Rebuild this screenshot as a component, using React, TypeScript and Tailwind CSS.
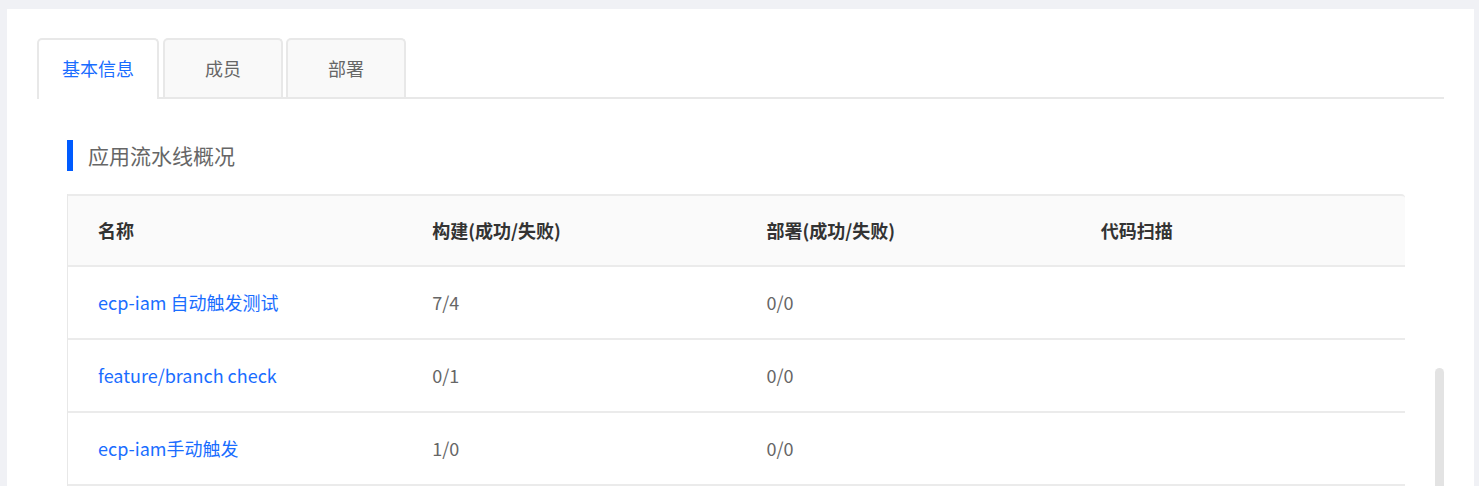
const rows = [
  { name: "ecp-iam 自动触发测试", build: "7/4", deploy: "0/0", scan: "" },
  { name: "feature/branch check", build: "0/1", deploy: "0/0", scan: "" },
  { name: "ecp-iam手动触发", build: "1/0", deploy: "0/0", scan: "" },
];

const tabs = ["基本信息", "成员", "部署"];

export default function App() {
  return (
    <div
      className="h-[486px] overflow-hidden bg-[#f0f1f5] pt-[9px] pl-[7px] pr-[5px]"
      style={{ fontFamily: '"Noto Sans CJK SC", "Noto Sans", sans-serif' }}
    >
      <div className="relative h-full bg-white px-[30px] pt-[30px]">
        {/* TABS */}
        <div className="flex h-[60px] items-end border-b-2 border-[#e8e8e8]">
          {tabs.map((t, i) => (
            <div
              key={t}
              className={
                i === 0
                  ? "-mb-[2px] mr-[4px] flex h-[61px] w-[122px] items-center justify-center rounded-t-[5px] border-2 border-b-0 border-[#e8e8e8] bg-white pb-[2px] text-[18px] text-[#1a6dff]"
                  : "mr-[3px] flex h-[59px] w-[120px] items-center justify-center rounded-t-[5px] border-2 border-b-0 border-[#e8e8e8] bg-[#f9f9f9] text-[18px] text-[#666]"
              }
            >
              {t}
            </div>
          ))}
        </div>

        <div className="pl-[30px] pr-[39px]">
          {/* SECTION TITLE */}
          <div className="mt-[41px] flex h-[31px] items-center">
            <div className="h-full w-[6px] bg-[#005bff]" />
            <span className="ml-[15px] text-[21px] leading-none text-[#666]">
              应用流水线概况
            </span>
          </div>

          {/* TABLE */}
          <div className="mt-[23px] border-l border-[#e8e8e8]">
            <div className="grid h-[73px] grid-cols-4 items-center rounded-tr-[4px] border-y-2 border-[#ebebeb] bg-[#fafafa] text-[18px] font-bold text-[#333]">
              <div className="pl-[30px]">名称</div>
              <div className="pl-[30px]">构建(成功/失败)</div>
              <div className="pl-[30px]">部署(成功/失败)</div>
              <div className="pl-[30px]">代码扫描</div>
            </div>
            {rows.map((r) => (
              <div
                key={r.name}
                className="grid h-[73px] grid-cols-4 items-center border-b-2 border-[#ebebeb] text-[18px] text-[#666]"
              >
                <div className="pl-[30px] text-[#1a6dff]">{r.name}</div>
                <div className="pl-[30px]">{r.build}</div>
                <div className="pl-[30px]">{r.deploy}</div>
                <div className="pl-[30px]">{r.scan}</div>
              </div>
            ))}
          </div>
        </div>

        {/* SCROLLBAR */}
        <div className="absolute right-[30px] top-[359px] h-[200px] w-[9px] rounded-full bg-[#e3e3e3]" />
      </div>
    </div>
  );
}
